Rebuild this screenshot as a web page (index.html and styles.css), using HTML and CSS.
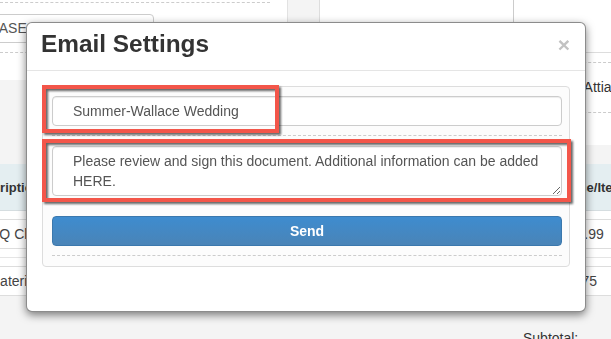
FILE: index.html
```html
<!DOCTYPE html>
<html lang="en">
<head>
    <meta charset="UTF-8">
    <meta name="viewport" content="width=device-width, initial-scale=1.0">
    <title>Email Settings</title>
    <link rel="stylesheet" href="styles.css">
</head>
<body>
    <div class="page">
        <div class="top-row">
            <div class="card card-client">
                <div class="dash-line"></div>
                <div class="field">PURCHASE</div>
                <div class="dash-line"></div>
            </div>
            <div class="card card-info">
                <div class="info-col"></div>
                <div class="info-col info-side">
                    <div class="info-head"></div>
                    <div class="info-line">Dana Attias</div>
                </div>
            </div>
        </div>

        <div class="card items">
            <div class="items-row items-head">
                <div>Description</div>
                <div>Price/Item</div>
            </div>
            <div class="items-row item">
                <div>1 BBQ Chicken</div>
                <div>$11.99</div>
            </div>
            <div class="items-spacer"></div>
            <div class="items-row item">
                <div>All Materials</div>
                <div>$2.75</div>
            </div>
        </div>

        <div class="totals">Subtotal:</div>
    </div>

    <!-- окно настроек письма -->
    <div class="modal">
        <div class="modal-header">
            <h3 class="modal-title">Email Settings</h3>
            <button class="close">&times;</button>
        </div>
        <div class="modal-body">
            <div class="well">
                <div class="form-group">
                    <input type="text" class="form-control" value="Summer-Wallace Wedding">
                </div>
                <div class="form-group no-line">
                    <textarea class="form-control">Please review and sign this document. Additional information can be added HERE.</textarea>
                </div>
                <div class="form-group">
                    <button class="btn-send">Send</button>
                </div>
                <!-- красные рамки-выделения -->
                <div class="mark mark-subject"></div>
                <div class="mark mark-message"></div>
            </div>
        </div>
    </div>
</body>
</html>
```

FILE: styles.css
```css
/* Общие стили */
body {
    margin: 0;
    padding: 0;
    font-family: "Liberation Sans", Arial, sans-serif;
    font-size: 14px;
    color: #333;
    background-color: #f4f4f4;
    overflow: hidden;
    height: 339px;
}

.card {
    background-color: #fff;
}

/* Верхний ряд карточек */
.top-row {
    display: flex;
    align-items: flex-start;
    gap: 31px;
}

.card-client {
    flex-shrink: 0;
    width: 288px;
    height: 80px;
    padding-top: 2px;
    box-sizing: border-box;
    border-right: 1px solid #e2e2e2;
}

.dash-line {
    border-top: 1px dashed #ccc;
    width: 270px;
}

.field {
    margin: 11px 0 9px -64px;
    width: 218px;
    height: 29px;
    box-sizing: border-box;
    border: 1px solid #ccc;
    border-radius: 4px;
    padding-left: 12px;
    line-height: 27px;
    color: #555;
}

.card-info {
    flex: 1;
    min-width: 0;
    height: 145px;
    display: flex;
    border-left: 1px solid #ddd;
}

.info-col {
    flex-shrink: 0;
    width: 193px;
    border-right: 1px solid #ccc;
}

.info-side {
    flex: 1;
    min-width: 0;
    overflow: hidden;
    border-right: none;
}

.info-head {
    height: 52px;
    border-bottom: 1px solid #ddd;
}

.info-line {
    margin-top: 9px;
    height: 49px;
    line-height: 49px;
    padding-left: 33px;
    border-top: 1px dashed #ccc;
    border-bottom: 1px dashed #ccc;
    white-space: nowrap;
}

/* Таблица позиций */
.items {
    margin-top: 19px;
    margin-left: -39px;
    width: 700px;
}

.items-row {
    display: grid;
    grid-template-columns: 593px 1fr;
    white-space: nowrap;
}

.items-row div {
    padding: 0 8px;
}

.items-head {
    height: 46px;
    line-height: 48px;
    background-color: #e4eef1;
    border-bottom: 1px solid #d5dde0;
    font-size: 13px;
    font-weight: bold;
}

.item {
    margin-top: 8px;
    height: 28px;
    line-height: 28px;
    border-top: 1px solid #ddd;
    border-bottom: 1px solid #ddd;
    color: #444;
}

.items-spacer {
    height: 8px;
    border-bottom: 1px solid #e5e5e5;
}

.totals {
    margin-top: 34px;
    padding-left: 523px;
    color: #333;
}

/* Модальное окно */
.modal {
    position: fixed;
    top: 22px;
    left: 26px;
    width: 560px;
    height: 290px;
    box-sizing: border-box;
    background-color: #fff;
    border: 1px solid rgba(0, 0, 0, 0.45);
    border-radius: 6px;
    box-shadow: 0 3px 9px rgba(0, 0, 0, 0.5);
}

.modal-header {
    display: flex;
    justify-content: space-between;
    align-items: flex-start;
    padding: 8px 15px 13px 14px;
    border-bottom: 1px solid #e5e5e5;
}

.modal-title {
    margin: 0;
    font-size: 24.4px;
    line-height: 26px;
    font-weight: bold;
    color: #333;
}

.close {
    margin-top: 3px;
    padding: 0;
    background: none;
    border: none;
    font-family: "Liberation Sans", Arial, sans-serif;
    font-size: 21px;
    font-weight: bold;
    line-height: 1;
    color: #c2c2c2;
    cursor: pointer;
}

.modal-body {
    padding: 15px 15px 0;
}

.well {
    position: relative;
    padding: 9px 7px 0 9px;
    background-color: #fcfcfc;
    border: 1px solid #ddd;
    border-radius: 4px;
}

.form-group {
    padding-bottom: 9px;
    margin-bottom: 10px;
    border-bottom: 1px dashed #ccc;
}

.form-group.no-line {
    padding-bottom: 0;
    margin-bottom: 20px;
    border-bottom: none;
}

.form-group:last-of-type {
    margin-bottom: 19px;
}

.form-control {
    display: block;
    width: 100%;
    box-sizing: border-box;
    border: 1px solid #ccc;
    border-radius: 4px;
    box-shadow: inset 0 1px 1px rgba(0, 0, 0, 0.075);
    background-color: #fff;
    font-family: "Liberation Sans", Arial, sans-serif;
    font-size: 14px;
    color: #555;
}

input.form-control {
    height: 30px;
    padding: 0 20px;
}

textarea.form-control {
    height: 50px;
    padding: 4px 20px;
    line-height: 20px;
    resize: vertical;
}

.btn-send {
    display: block;
    width: 100%;
    height: 30px;
    background: linear-gradient(to bottom, #3e8ccf 0%, #4a84b7 100%);
    border: 1px solid #3b78ad;
    border-radius: 4px;
    color: #fff;
    font-family: "Liberation Sans", Arial, sans-serif;
    font-size: 14px;
    font-weight: bold;
    cursor: pointer;
}

/* Рамки-выделения поверх полей */
.mark {
    position: absolute;
    border: 4px solid #f3564a;
    box-sizing: border-box;
    filter: drop-shadow(2px 2px 1px rgba(0, 0, 0, 0.6));
}

.mark-subject {
    left: -1px;
    top: -2px;
    width: 237px;
    height: 48px;
}

.mark-message {
    left: -1px;
    top: 52px;
    width: 529px;
    height: 63px;
}
```
